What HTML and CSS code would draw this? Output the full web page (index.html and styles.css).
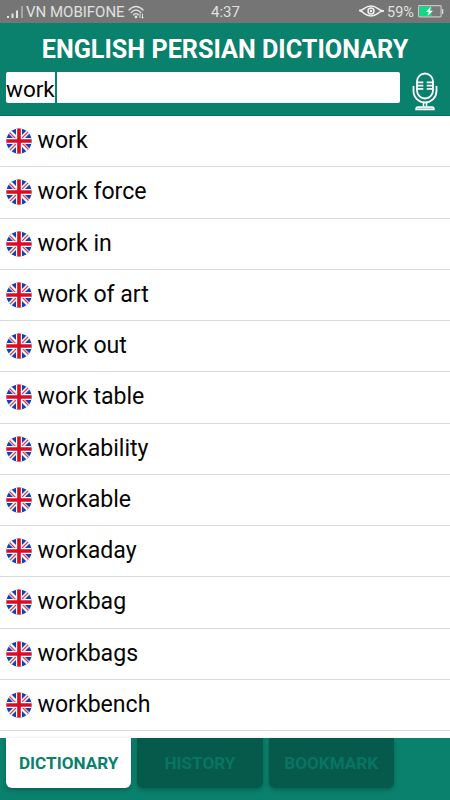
FILE: index.html
```html
<!DOCTYPE html>
<html lang="en">
<head>
<meta charset="utf-8">
<title>English Persian Dictionary</title>
<link rel="stylesheet" href="styles.css">
</head>
<body>
<svg class="defs" width="0" height="0">
  <defs>
    <clipPath id="disc"><circle cx="13" cy="13" r="12.6"/></clipPath>
    <symbol id="flag" viewBox="0 0 26 26">
      <g clip-path="url(#disc)">
        <path fill="#0c44b8" d="M0 0h26v26H0z"/>
        <path stroke="#fff" stroke-width="4.200" d="M2 2l22 22M24 2L2 24"/>
        <path stroke="#e33b4c" stroke-width="1.3" d="M2 3l10 10M14 12L24 2M2 24l10-10M14 13l10 10"/>
        <path fill="#fff" d="M10 0h6v26h-6zM0 10h26v6H0z"/>
        <path fill="#dc0a24" d="M11.200 0h3.600v26h-3.600zM0 11.200h26v3.600H0z"/>
      </g>
    </symbol>
  </defs>
</svg>
<div class="app">
  <div class="status">
    <svg class="signal" width="18" height="14" viewBox="0 0 18 14"><path fill="#e4e4e4" d="M0 11h2v2H0zM4.500 8.500h2V13h-2zM9 5.500h2V13H9z"/><path fill="#a5a5a5" d="M14 1h2v12h-2z"/></svg>
    <span class="carrier">VN MOBIFONE</span>
    <svg class="wifi" width="17" height="14" viewBox="0 0 17 14" fill="none" stroke="#e0e0e0" stroke-width="1.400" stroke-linecap="round"><path d="M1 5Q8 -2 15 5M3.300 7.400q4.700-4.600 9.400 0M5.600 9.800q2.400-2.400 4.600 0"/><circle cx="8" cy="12" r=".7" fill="#e0e0e0"/><path stroke-width="1" d="M12 9v3.500M14.500 9v4M13.700 12.200l.8.800.8-.8"/></svg>
    <span class="time">4:37</span>
    <svg class="eye" width="25" height="13" viewBox="0 0 25 13" fill="none" stroke="#f0f0f0" stroke-width="1.500"><path d="M0 5.500Q3 5.500 5 3.600Q12 -1.500 19 3.600Q21 5.500 25 6Q21 6 19 8.300Q12 13.500 5 8.300Q3 6 0 5.500"/><circle cx="12" cy="6" r="3"/><circle cx="12" cy="6" r=".6"/></svg>
    <span class="percent">59%</span>
    <svg class="battery" width="26" height="13" viewBox="0 0 26 13"><rect x=".6" y=".6" width="22.500" height="11.200" rx=".8" fill="#7a7a7a" stroke="#c6c6c6" stroke-width="1.200"/><path fill="#12d984" d="M1.500 1.500h12v9.500h-12z"/><path fill="#fff" d="M13 1.500L7.800 7h3l-1.300 4L15 5.700h-3.200z"/><path fill="#d5d5d5" d="M24 4h1.300v5H24z"/></svg>
  </div>
  <header class="header">
    <h1 class="title">ENGLISH PERSIAN DICTIONARY</h1>
    <div class="search">
      <div class="field"><span>work</span><i class="caret"></i></div>
      <svg class="mic" width="26" height="40" viewBox="0 0 26 40" fill="none" stroke="#fff" stroke-width="1.800"><rect x="5" y="1.500" width="16" height="25" rx="8"/><path d="M5 10.300h6.300M5 13.600h6.300M5 16.900h6.300M14.700 10.300H21M14.700 13.600H21M14.700 16.900H21" stroke-width="1.700"/><path d="M1.500 14v5a11.500 11.500 0 0 0 23 0v-5"/><path d="M11.500 30.500v4M14.500 30.500v4" stroke-width="1.500"/><path fill="#8fc5bc" stroke-width="1.400" d="M4 37.500v-.5q0-2 2-2h14q2 0 2 2v.5z"/></svg>
    </div>
  </header>
  <ul class="words">
    <li><svg class="flag"><use href="#flag"/></svg><span>work</span></li>
    <li><svg class="flag"><use href="#flag"/></svg><span>work force</span></li>
    <li><svg class="flag"><use href="#flag"/></svg><span>work in</span></li>
    <li><svg class="flag"><use href="#flag"/></svg><span>work of art</span></li>
    <li><svg class="flag"><use href="#flag"/></svg><span>work out</span></li>
    <li><svg class="flag"><use href="#flag"/></svg><span>work table</span></li>
    <li><svg class="flag"><use href="#flag"/></svg><span>workability</span></li>
    <li><svg class="flag"><use href="#flag"/></svg><span>workable</span></li>
    <li><svg class="flag"><use href="#flag"/></svg><span>workaday</span></li>
    <li><svg class="flag"><use href="#flag"/></svg><span>workbag</span></li>
    <li><svg class="flag"><use href="#flag"/></svg><span>workbags</span></li>
    <li><svg class="flag"><use href="#flag"/></svg><span>workbench</span></li>
  </ul>
  <nav class="tabs">
    <div class="tab active">DICTIONARY</div>
    <div class="tab">HISTORY</div>
    <div class="tab">BOOKMARK</div>
  </nav>
</div>
</body>
</html>
```
FILE: styles.css
```css
* { box-sizing: border-box; }
body { margin: 0; font-family: Roboto, "Liberation Sans", sans-serif; background: #fff; }
.defs { position: absolute; }
.app { width: 450px; height: 800px; display: flex; flex-direction: column; overflow: hidden; }
.status { height: 23px; flex: none; background: #757575; color: #e0e0e0; display: flex; align-items: center; padding-left: 7px; font-size: 15px; line-height: 23px; white-space: nowrap; }
.status span { padding-top: 1px; }
.signal { margin-right: 1px; flex: none; }
.carrier { width: 100px; }
.wifi { margin-left: 2px; flex: none; }
.time { margin-left: 66px; width: 148px; }
.eye { flex: none; }
.percent { margin-left: 3px; width: 31px; font-size: 14.5px; }
.battery { flex: none; }
.header { height: 93px; flex: none; background: #0a816d; border-bottom: 1px solid #08705e; }
.title { margin: 0; padding-top: 11px; height: 48px; line-height: 32px; font-size: 25.2px; font-weight: 700; color: #fff; text-align: center; white-space: nowrap; }
.search { display: flex; padding: 1px 12px 0 6px; justify-content: space-between; }
.field { width: 394px; height: 31px; background: #fff; border-radius: 2px; display: flex; font-size: 22.5px; line-height: 35px; color: #000; }
.caret { width: 2px; height: 31px; background: #0a816d; }
.mic { flex: none; }
.words { list-style: none; margin: 0; padding: 0; height: 622px; flex: none; }
.words li { height: 51.25px; border-bottom: 1px solid #d9d9d9; display: flex; padding: 12px 6px 0; font-size: 23.1px; line-height: 25px; color: #050505; }
.flag { width: 26px; height: 26px; flex: none; margin-right: 5.6px; }
.tabs { flex: 1; background: #0a816d; display: flex; gap: 6px; padding: 0 6px; }
.tab { width: 125.3px; height: 49.5px; border-radius: 0 0 6px 6px; background: #055a4c; color: #087562; font-size: 17.1px; font-weight: 700; line-height: 51px; text-align: center; box-shadow: 0 2px 4px rgba(0,50,40,.4); }
.active { background: #fff; color: #0a816d; }
```
